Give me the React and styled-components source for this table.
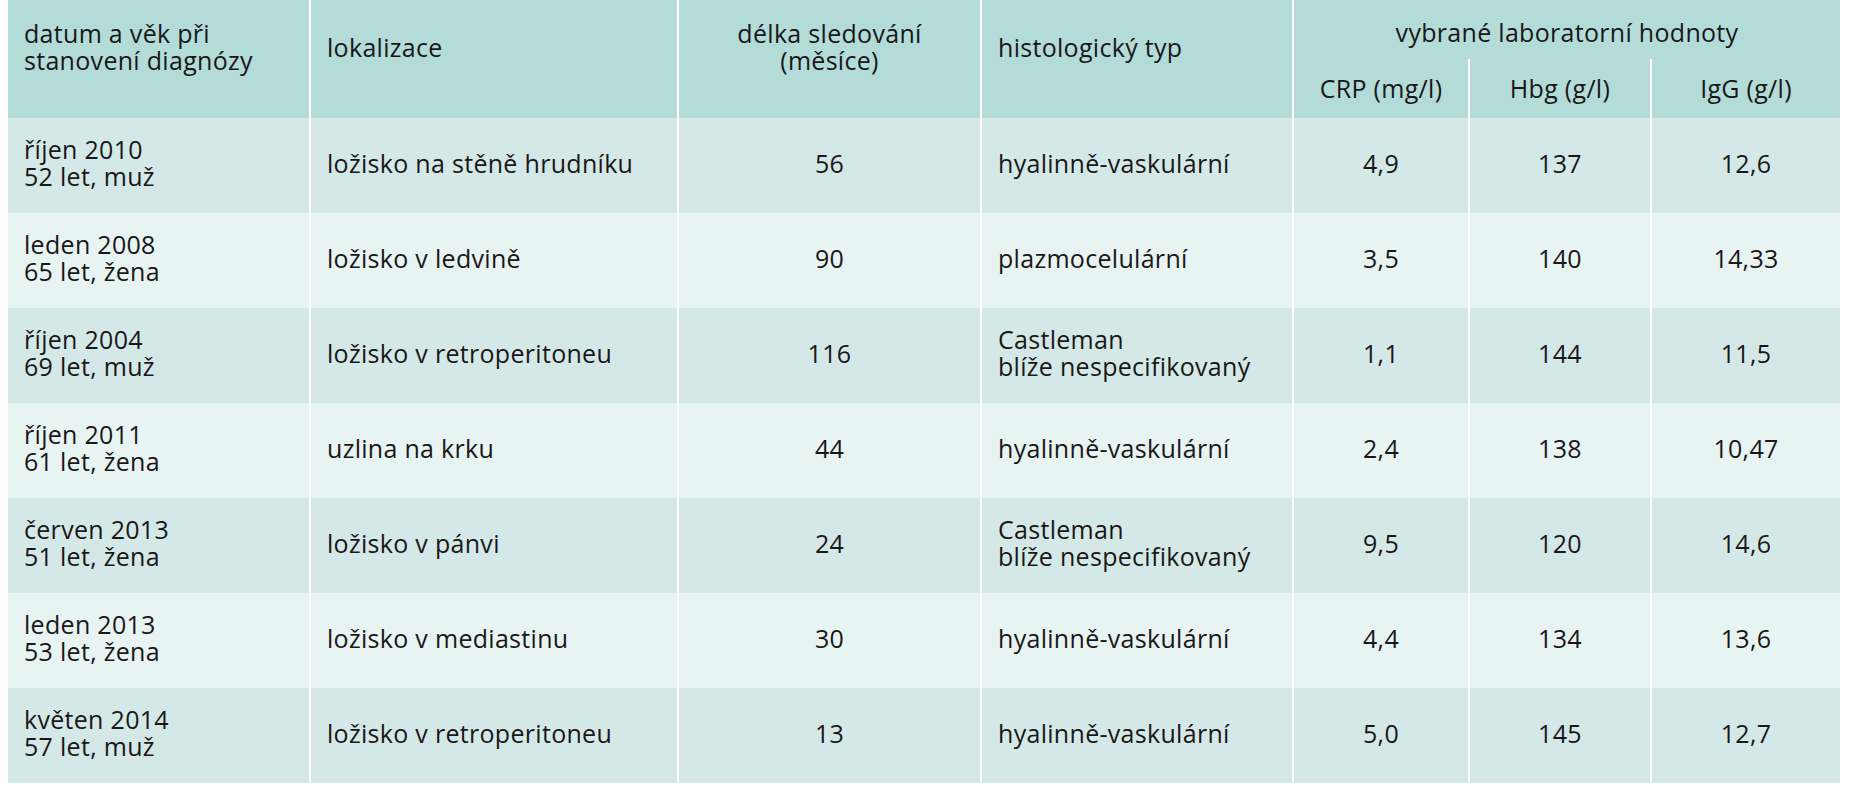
import React from "react";
import styled, { createGlobalStyle } from "styled-components";

const Global = createGlobalStyle`
  html, body { margin: 0; padding: 0; background: #ffffff; }
  body { font-family: "Open Sans", "Noto Sans", sans-serif; color: #1a1718; }
`;

const Grid = styled.div`
  display: grid;
  grid-template-columns: 301px 366px 301px 310px 174px 180px 188px;
  grid-template-rows: 59px 59px repeat(7, 95px);
  column-gap: 2px;
  margin-left: 8px;
  width: 1832px;
  background: #ffffff;
  font-size: 25px;
  font-weight: 500;
  letter-spacing: 0.3px;
  line-height: 27px;
`;

const HeadCell = styled.div`
  background: #b3dcd8;
  grid-row: ${(p) => (p.$tall ? "span 2" : "auto")};
  grid-column: ${(p) => (p.$wide ? "span 3" : "auto")};
  display: flex;
  flex-direction: column;
  justify-content: center;
  align-items: ${(p) => (p.$center ? "center" : "flex-start")};
  text-align: ${(p) => (p.$center ? "center" : "left")};
  padding: ${(p) => (p.$tall ? "0 16px 24px" : p.$wide ? "6px 16px 0" : "0 16px")};
  white-space: nowrap;
`;

const BodyCell = styled.div`
  background: ${(p) => (p.$light ? "#e8f4f2" : "#d4e9e7")};
  display: flex;
  flex-direction: column;
  justify-content: center;
  align-items: ${(p) => (p.$center ? "center" : "flex-start")};
  text-align: ${(p) => (p.$center ? "center" : "left")};
  padding: 0 16px 5px;
  white-space: nowrap;
`;

const Line = styled.span`
  display: block;
`;

const rows = [
  ["říjen 2010", "52 let, muž", "ložisko na stěně hrudníku", "56", ["hyalinně-vaskulární"], "4,9", "137", "12,6"],
  ["leden 2008", "65 let, žena", "ložisko v ledvině", "90", ["plazmocelulární"], "3,5", "140", "14,33"],
  ["říjen 2004", "69 let, muž", "ložisko v retroperitoneu", "116", ["Castleman", "blíže nespecifikovaný"], "1,1", "144", "11,5"],
  ["říjen 2011", "61 let, žena", "uzlina na krku", "44", ["hyalinně-vaskulární"], "2,4", "138", "10,47"],
  ["červen 2013", "51 let, žena", "ložisko v pánvi", "24", ["Castleman", "blíže nespecifikovaný"], "9,5", "120", "14,6"],
  ["leden 2013", "53 let, žena", "ložisko v mediastinu", "30", ["hyalinně-vaskulární"], "4,4", "134", "13,6"],
  ["květen 2014", "57 let, muž", "ložisko v retroperitoneu", "13", ["hyalinně-vaskulární"], "5,0", "145", "12,7"],
];

export default function App() {
  return (
    <>
      <Global />
      <Grid>
        <HeadCell $tall>
          <Line>datum a věk při</Line>
          <Line>stanovení diagnózy</Line>
        </HeadCell>
        <HeadCell $tall>lokalizace</HeadCell>
        <HeadCell $tall $center>
          <Line>délka sledování</Line>
          <Line>(měsíce)</Line>
        </HeadCell>
        <HeadCell $tall>histologický typ</HeadCell>
        <HeadCell $wide $center>vybrané laboratorní hodnoty</HeadCell>
        <HeadCell $center>CRP (mg/l)</HeadCell>
        <HeadCell $center>Hbg (g/l)</HeadCell>
        <HeadCell $center>IgG (g/l)</HeadCell>
        {rows.map((r, i) => {
          const light = i % 2 === 1;
          return (
            <React.Fragment key={i}>
              <BodyCell $light={light}>
                <Line>{r[0]}</Line>
                <Line>{r[1]}</Line>
              </BodyCell>
              <BodyCell $light={light}>{r[2]}</BodyCell>
              <BodyCell $light={light} $center>{r[3]}</BodyCell>
              <BodyCell $light={light}>
                {r[4].map((t) => (
                  <Line key={t}>{t}</Line>
                ))}
              </BodyCell>
              <BodyCell $light={light} $center>{r[5]}</BodyCell>
              <BodyCell $light={light} $center>{r[6]}</BodyCell>
              <BodyCell $light={light} $center>{r[7]}</BodyCell>
            </React.Fragment>
          );
        })}
      </Grid>
    </>
  );
}
